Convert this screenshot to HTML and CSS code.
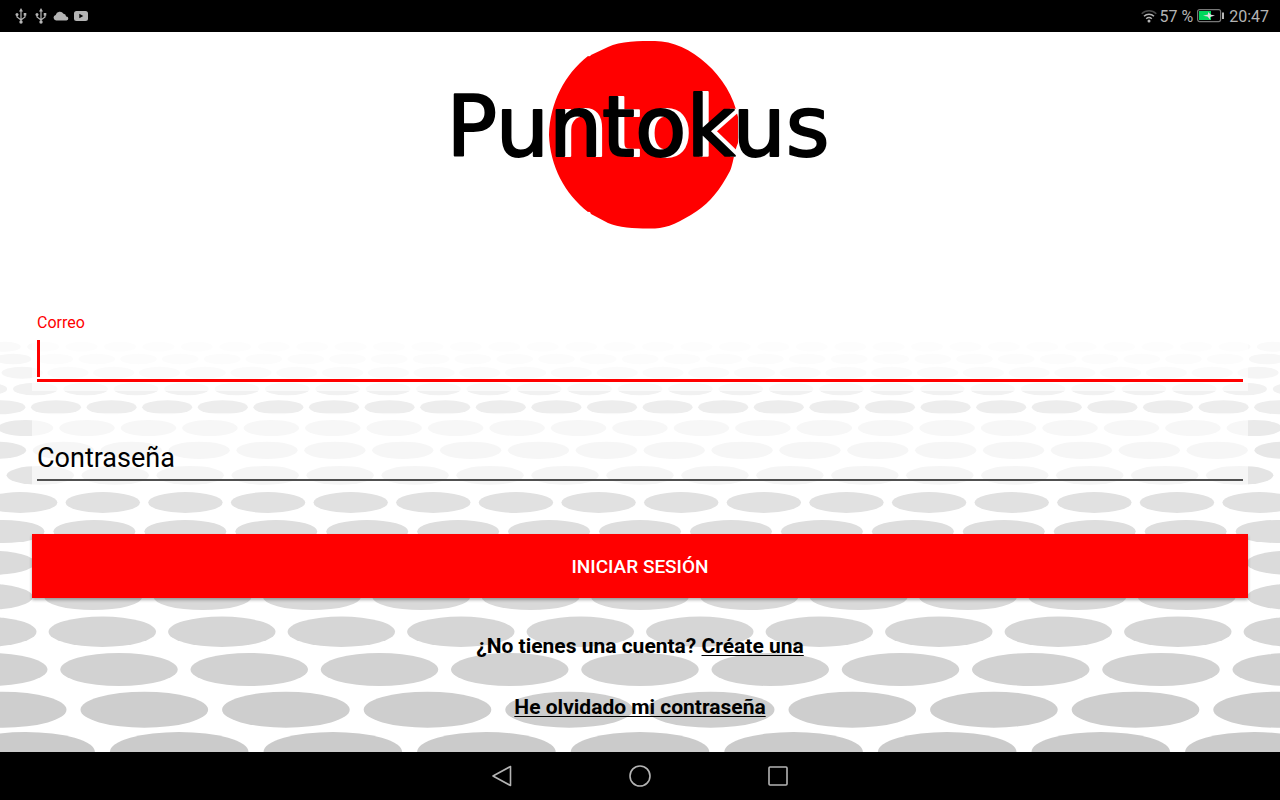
FILE: index.html
```html
<!DOCTYPE html>
<html lang="es">
<head>
<meta charset="utf-8">
<meta name="viewport" content="width=device-width, initial-scale=1">
<title>Puntokus</title>
<link rel="stylesheet" href="styles.css">
</head>
<body>
<header class="status">
  <div class="status-group">
    <svg class="icon-usb" viewBox="0 0 12 16" aria-hidden="true"><path d="M6 3v11M2 7v2l4 3 4-3V7" fill="none" stroke="currentColor" stroke-width="1.2"/><path d="M6 0l2 3.500H4z" fill="currentColor"/><circle cx="6" cy="14" r="1.700" fill="currentColor"/><circle cx="2" cy="6.500" r="1.500" fill="currentColor"/><path d="M8.700 5h2.600v2.600H8.700z" fill="currentColor"/></svg>
    <svg class="icon-usb" viewBox="0 0 12 16" aria-hidden="true"><path d="M6 3v11M2 7v2l4 3 4-3V7" fill="none" stroke="currentColor" stroke-width="1.2"/><path d="M6 0l2 3.500H4z" fill="currentColor"/><circle cx="6" cy="14" r="1.700" fill="currentColor"/><circle cx="2" cy="6.500" r="1.500" fill="currentColor"/><path d="M8.700 5h2.600v2.600H8.700z" fill="currentColor"/></svg>
    <svg class="icon-cloud" viewBox="0 0 16 10" aria-hidden="true"><path d="M3 9.500a2.800 2.800 0 0 1-.3-5.500A4.300 4.300 0 0 1 10.500 2.800a3 3 0 0 1 2.600 2.700 2 2 0 0 1 .4 4z" fill="currentColor"/></svg>
    <svg class="icon-video" viewBox="0 0 14 10" aria-hidden="true"><rect width="14" height="10" rx="2.500" fill="currentColor"/><path d="M5.300 2.700v4.600L9.300 5z" fill="#000"/></svg>
  </div>
  <div class="status-group status-right">
    <svg class="icon-wifi" viewBox="0 0 16 14" aria-hidden="true"><g fill="none" stroke="currentColor" stroke-width="1.500"><path d="M.7 4.800a10.500 10.500 0 0 1 14.600 0" opacity=".4"/><path d="M3 7.300a7.200 7.200 0 0 1 10 0M5.200 9.800a4.200 4.200 0 0 1 5.600 0"/></g><circle cx="8" cy="12" r="1.500" fill="currentColor"/></svg>
    <span>57 %</span>
    <svg class="icon-battery" viewBox="0 0 27 14" aria-hidden="true"><rect x=".6" y=".6" width="23" height="12" rx="2" fill="none" stroke="#777" stroke-width="1.200"/><rect x="2" y="2" width="12" height="9" fill="#00d75c"/><path d="M6 6.800l5-1.200V3l3 2.700 4 .8-5 1.500v2.500L10.500 7.500z" fill="#ddd"/><rect x="25" y="3.500" width="2" height="6.500" fill="#b8b8b8"/></svg>
    <time class="clock">20:47</time>
  </div>
</header>

<main class="screen">
  <svg class="dots" viewBox="0 32 1280 720" preserveAspectRatio="xMidYMax slice" aria-hidden="true"></svg>
  <svg class="logo" viewBox="437 41 406 188" role="img" aria-label="Puntokus">
    <path d="M549 135C550 102 565 74 588 56Q590 57 591 55L608 47C620 41 640 41 655 41C690 41 730 76 738 117V143C734 152 733 165 730 171C720 190 710 202 697 211C680 222 668 228 655 228.500C640 229 620 228 608 223L591 214Q590 211 588 212C565 194 550 166 549 135Z" fill="#f00"/>
    <text class="logo-text" x="638" y="156" text-anchor="middle">Puntokus</text>
  </svg>

  <form class="form">
    <div class="field field-active">
      <label class="field-label" for="correo">Correo</label>
      <input class="field-input" id="correo" type="email">
    </div>
    <div class="field field-password">
      <input class="field-input" id="clave" type="password" placeholder="Contraseña" aria-label="Contraseña">
    </div>
    <button class="submit" type="button">INICIAR SESIÓN</button>
  </form>
  <p class="line line-first">¿No tienes una cuenta? <a class="link" href="#crear">Créate una</a></p>
  <p class="line"><a class="link" href="#recuperar">He olvidado mi contraseña</a></p>
</main>

<nav class="navbar">
  <button class="nav-button" type="button" aria-label="Atrás"><svg class="nav-icon" viewBox="0 0 24 24"><path d="M20.500 2.500v19L3 12z"/></svg></button>
  <button class="nav-button" type="button" aria-label="Inicio"><svg class="nav-icon" viewBox="0 0 24 24"><circle cx="12" cy="12" r="10"/></svg></button>
  <button class="nav-button" type="button" aria-label="Recientes"><svg class="nav-icon" viewBox="0 0 24 24"><rect x="3" y="3" width="18" height="18" rx="1"/></svg></button>
</nav>
<script src="dots.js"></script>
</body>
</html>
```
FILE: styles.css
```css
* { box-sizing: border-box; }

body {
  margin: 0;
  min-height: 100vh;
  display: flex;
  flex-direction: column;
  background: #fff;
  color: #000;
  font-family: Roboto, sans-serif;
}

.status {
  height: 32px;
  padding: 0 11px 0 15px;
  display: flex;
  align-items: center;
  justify-content: space-between;
  background: #000;
  color: #b4b4b4;
  font-size: 16px;
}
.status-group { display: flex; align-items: center; gap: 8px; }
.status-right { gap: 4px; }
.icon-usb { width: 12px; height: 16px; }
.icon-cloud { width: 16px; height: 10px; margin-left: -2px; }
.icon-video { width: 14px; height: 10px; margin-left: -3px; }
.icon-wifi { width: 16px; height: 14px; margin-right: -2px; }
.icon-battery { width: 27px; height: 14px; }
.clock { margin-left: 1px; }

.screen {
  position: relative;
  flex: 1;
  display: flex;
  flex-direction: column;
  padding: 9px 32px 28px;
  overflow: hidden;
}
.screen > * { position: relative; }
.screen > .dots {
  position: absolute;
  inset: 0;
  width: 100%;
  height: 100%;
}

.logo {
  align-self: center;
  width: 406px;
  max-width: 100%;
  height: 188px;
}
.logo-text {
  font-family: "DejaVu Sans", sans-serif;
  font-size: 84px;
  fill: #000;
  stroke: #000;
  stroke-width: 2px;
  stroke-linejoin: round;
  filter: drop-shadow(6px 0 0 #fff);
}

.form { display: flex; flex-direction: column; margin-top: 80px; }
.field {
  display: flex;
  flex-direction: column;
  padding: 4px 5px;
  background: rgba(255, 255, 255, 0.62);
}
.field-label { color: #f00; font-size: 16px; line-height: 20px; }
.field-input {
  width: 100%;
  height: 46px;
  padding: 2px 0 0;
  border: 0;
  border-bottom: 2px solid #505050;
  border-radius: 0;
  outline: 0;
  background: transparent;
  color: #000;
  font: 27px/32px Roboto, sans-serif;
}
.field-input::placeholder { color: #000; opacity: 1; }
.field-active { padding: 4px 5px 9px; }
.field-active .field-input {
  margin-top: 3px;
  border-bottom: 3px solid #f00;
  background: linear-gradient(#f00, #f00) 0 4px / 3px 37px no-repeat;
}
.field-password { margin-top: 22px; padding-top: 22px; }
.submit {
  height: 64px;
  margin-top: 49px;
  padding: 2px 0 0;
  border: 0;
  background: #f00;
  color: #fff;
  font: 500 19px/24px Roboto, sans-serif;
  box-shadow: 0 2px 3px rgba(0, 0, 0, 0.3);
}
.line {
  margin: 33px 0 0;
  text-align: center;
  font-size: 21px;
  line-height: 28px;
  font-weight: 700;
}
.line-first { margin-top: 34px; }
.link {
  color: inherit;
  text-decoration: underline 1px;
  text-underline-offset: 2px;
}

.navbar {
  height: 48px;
  display: flex;
  align-items: center;
  justify-content: center;
  gap: 90px;
  background: #000;
}
.nav-button {
  width: 48px;
  height: 48px;
  padding: 0;
  border: 0;
  background: none;
}
.nav-icon {
  display: block;
  width: 24px;
  height: 24px;
  margin: 0 auto;
  fill: none;
  stroke: #b4b4b4;
  stroke-width: 1.6;
  stroke-linejoin: round;
}
```
FILE: dots.js
```js
// Rows of the dotted floor: [centre y, rx, ry, pitch, centre x of one dot, grey]
const rows = [
  [346.7, 16, 5, 38.43, 504.3, 250],
  [359, 18.3, 5.3, 41.8, 96.7, 247],
  [372.7, 20.6, 6, 45.77, 113.7, 245],
  [389, 22.3, 6.3, 50.39, 35.3, 241],
  [407.3, 25, 7, 55.6, 56, 237],
  [428, 27.8, 8, 61.44, 87, 234],
  [450.3, 30.6, 8.6, 67.87, 267, 231],
  [475.3, 33.7, 9.4, 74.96, 40.3, 228],
  [502.5, 37.2, 10.4, 82.63, 102.8, 225],
  [531.5, 41, 11.5, 90.94, 94.4, 222],
  [562.8, 45, 12.2, 100.1, -10, 219],
  [596.8, 49, 13.3, 109.35, 93.2, 217],
  [631.8, 53.7, 15.2, 119.5, 102.3, 214],
  [669.5, 58.7, 16.5, 130.25, 119, 210],
  [709.7, 63.8, 18, 141.6, 144.3, 206],
  [752, 69.3, 20, 153.6, 179.2, 203]
];
const svg = document.querySelector(".dots");
for (const [cy, rx, ry, pitch, x0, grey] of rows) {
  let cx = x0 - Math.ceil((x0 + rx) / pitch) * pitch;
  for (; cx - rx < 1280; cx += pitch) {
    const dot = document.createElementNS("http://www.w3.org/2000/svg", "ellipse");
    dot.setAttribute("cx", cx);
    dot.setAttribute("cy", cy);
    dot.setAttribute("rx", rx);
    dot.setAttribute("ry", ry);
    dot.setAttribute("fill", `rgb(${grey},${grey},${grey})`);
    svg.append(dot);
  }
}
```
